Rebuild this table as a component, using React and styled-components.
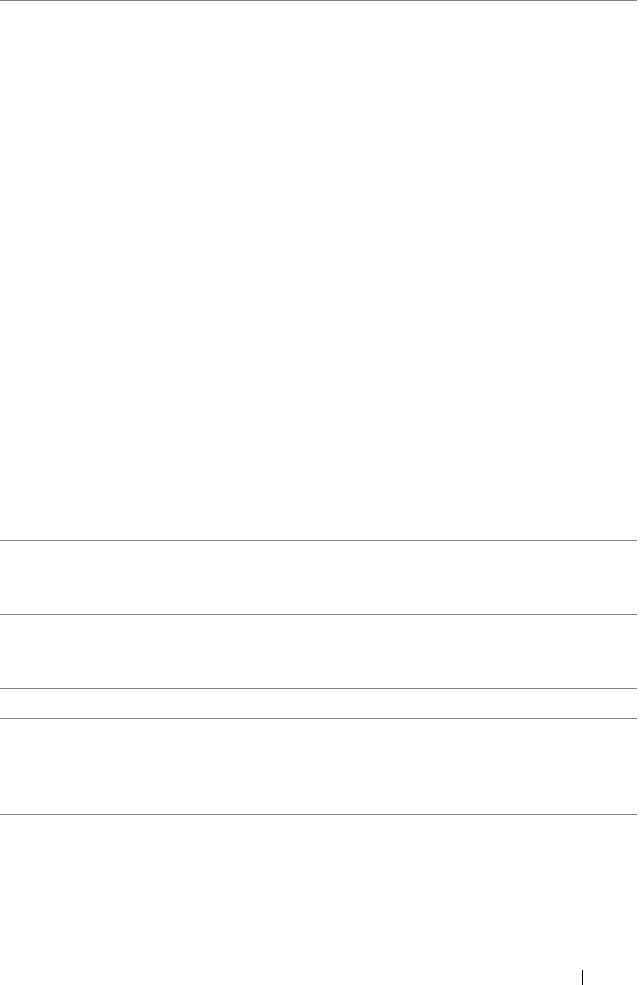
import React from 'react';
import styled, { createGlobalStyle } from 'styled-components';

const GlobalStyle = createGlobalStyle`
  html, body {
    margin: 0;
    padding: 0;
    background: #ffffff;
    font-family: "Liberation Serif", serif;
  }
`;

const Page = styled.div`
  width: 641px;
  height: 985px;
  display: flex;
  flex-direction: column;
  overflow: hidden;
`;

const Table = styled.div`
  width: 637px;
  display: flex;
  flex-direction: column;
  border-top: 1px solid #808080;
`;

const Row = styled.div`
  height: ${(p) => p.$h}px;
  border-bottom: 1px solid #808080;
  box-sizing: content-box;
`;

const Footer = styled.div`
  flex: 1;
  display: flex;
  justify-content: flex-end;
  align-items: flex-end;
  padding-right: 58px;
`;

const PageMark = styled.div`
  width: 1px;
  height: 15px;
  background: #000000;
`;

const rows = [539, 73, 73, 29, 95];

function App() {
  return (
    <Page>
      <GlobalStyle />
      <Table>
        {rows.map((h, i) => (
          <Row key={i} $h={h} />
        ))}
      </Table>
      <Footer>
        <PageMark />
      </Footer>
    </Page>
  );
}

export default App;
